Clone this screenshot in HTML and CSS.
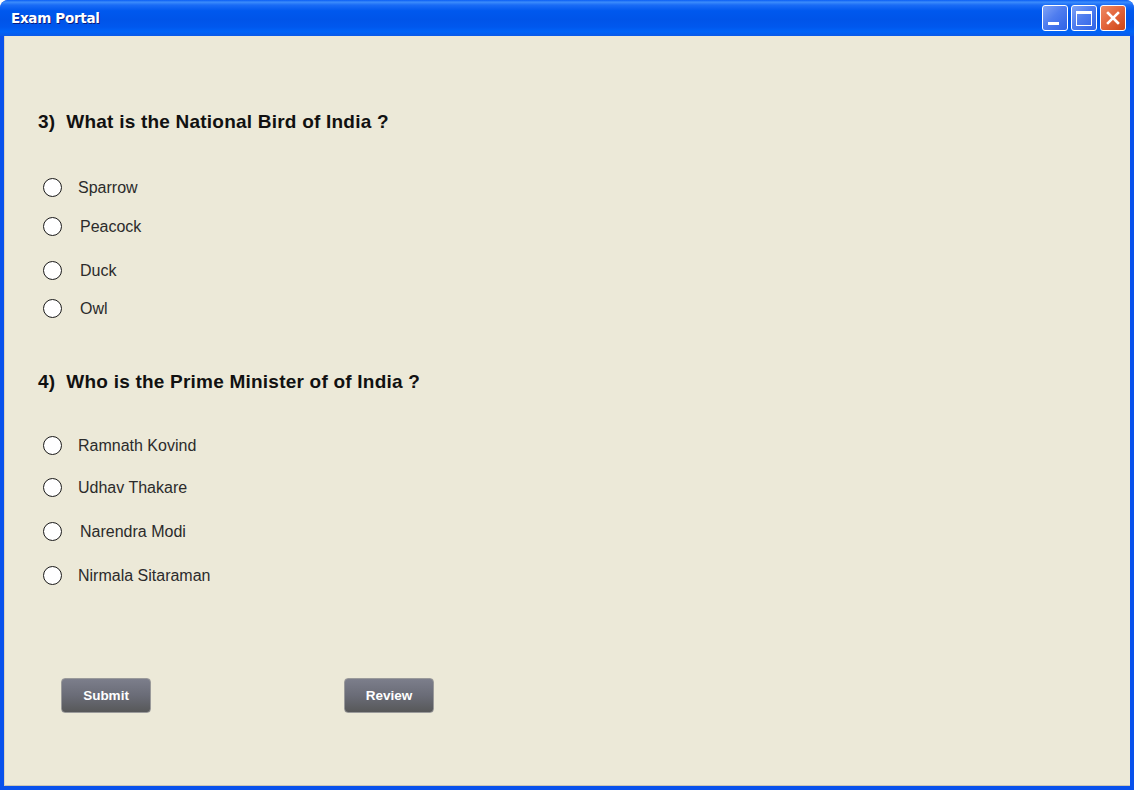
FILE: index.html
```html
<!DOCTYPE html>
<html>
<head>
<meta charset="utf-8">
<title>Exam Portal</title>
<link rel="stylesheet" href="styles.css">
</head>
<body>
<div class="window">
  <div class="titlebar">
    <span class="title">Exam Portal</span>
    <div class="controls">
      <div class="ctl ctl-min"><span class="min-bar"></span></div>
      <div class="ctl ctl-max"><span class="max-box"></span></div>
      <div class="ctl ctl-close">
        <svg width="16" height="16" viewBox="0 0 16 16"><path d="M3 3 L13 13 M13 3 L3 13" stroke="#fff" stroke-width="2.6" stroke-linecap="square"/></svg>
      </div>
    </div>
  </div>
  <div class="content">
    <h2 class="question">3)&nbsp; What is the National Bird of India ?</h2>
    <div class="options q3">
      <label class="option"><span class="radio"></span><span class="label">Sparrow</span></label>
      <label class="option gap-15"><span class="radio"></span><span class="label wide">Peacock</span></label>
      <label class="option gap-20"><span class="radio"></span><span class="label wide">Duck</span></label>
      <label class="option gap-14"><span class="radio"></span><span class="label wide">Owl</span></label>
    </div>
    <h2 class="question q4-head">4)&nbsp; Who is the Prime Minister of of India ?</h2>
    <div class="options q4">
      <label class="option"><span class="radio"></span><span class="label">Ramnath Kovind</span></label>
      <label class="option gap-18"><span class="radio"></span><span class="label">Udhav Thakare</span></label>
      <label class="option gap-20"><span class="radio"></span><span class="label wide">Narendra Modi</span></label>
      <label class="option gap-20"><span class="radio"></span><span class="label">Nirmala Sitaraman</span></label>
    </div>
    <div class="actions">
      <button class="btn">Submit</button>
      <button class="btn">Review</button>
    </div>
  </div>
</div>
</body>
</html>
```

FILE: styles.css
```css
* { box-sizing: border-box; }
html, body { margin: 0; padding: 0; }
body {
  width: 1134px;
  height: 790px;
  overflow: hidden;
  background: #ffffff;
  font-family: "Liberation Sans", Arial, sans-serif;
}
.window {
  width: 1134px;
  height: 790px;
  display: flex;
  flex-direction: column;
  background: #0851EC;
  border-radius: 8px 8px 0 0;
  overflow: hidden;
}
.titlebar {
  height: 36px;
  flex: none;
  display: flex;
  align-items: center;
  justify-content: space-between;
  padding: 0 8px 0 11px;
  background: linear-gradient(to bottom,
    #0A5EF5 0%, #3C8CFB 6%, #1A6CF6 14%, #0058EE 30%, #0054E9 55%,
    #0058EE 75%, #0063F8 88%, #0A5AE8 100%);
  border-radius: 8px 8px 0 0;
}
.title {
  color: #ffffff;
  font-family: "DejaVu Sans", Verdana, sans-serif;
  font-weight: bold;
  font-size: 13.5px;
  letter-spacing: -0.3px;
  text-shadow: 1px 1px 0 #0A1E80;
}
.controls {
  display: flex;
  gap: 3px;
}
.ctl {
  width: 26px;
  height: 26px;
  border: 1px solid #ffffff;
  border-radius: 3px;
  display: flex;
  align-items: center;
  justify-content: center;
}
.ctl-min, .ctl-max {
  background: linear-gradient(135deg, #7FA3F6 0%, #4F7DEF 45%, #2E62E6 100%);
}
.ctl-close {
  background: linear-gradient(135deg, #EE8A63 0%, #E2643A 50%, #CC4516 100%);
}
.min-bar {
  width: 11px;
  height: 3px;
  background: #fff;
  margin-top: 11px;
  margin-left: -3px;
}
.max-box {
  width: 16px;
  height: 15px;
  border: 1.5px solid #fff;
  border-top-width: 3px;
}
.content {
  flex: 1;
  margin: 0 4px 4px 4px;
  background: #ECE9D8;
  border-left: 1px solid #D5D2C4;
  border-bottom: 1px solid #C9C6B8;
  padding: 75px 0 0 33px;
  display: flex;
  flex-direction: column;
  align-items: flex-start;
}
.question {
  margin: 0;
  height: 21px;
  line-height: 21px;
  font-size: 19px;
  letter-spacing: 0.22px;
  font-weight: bold;
  color: #111111;
}
.q4-head { margin-top: 51px; }
.options {
  display: flex;
  flex-direction: column;
  margin-top: 43px;
}
.q4 { margin-top: 41px; }
.option {
  display: flex;
  align-items: center;
  height: 24px;
  padding-left: 5px;
}
.gap-14 { margin-top: 14px; }
.gap-15 { margin-top: 15px; }
.gap-18 { margin-top: 18px; }
.gap-20 { margin-top: 20px; }
.radio {
  width: 19px;
  height: 19px;
  border: 1.6px solid #1a1a1a;
  border-radius: 50%;
  background: #ffffff;
  flex: none;
}
.label {
  margin-left: 16px;
  font-size: 16px;
  line-height: 24px;
  padding-top: 1px;
  color: #2b2b2b;
}
.label.wide { margin-left: 18px; }
.actions {
  display: flex;
  gap: 193px;
  margin-top: 91px;
  padding-left: 23px;
}
.btn {
  width: 90px;
  height: 35px;
  border: 1px solid #9a9a9a;
  border-radius: 4px;
  background: linear-gradient(to bottom, #7C7E8B 0%, #6A6C77 50%, #575859 100%);
  color: #ffffff;
  font-family: "Liberation Sans", Arial, sans-serif;
  font-weight: bold;
  font-size: 13.5px;
  padding: 0;
  cursor: pointer;
}
```
